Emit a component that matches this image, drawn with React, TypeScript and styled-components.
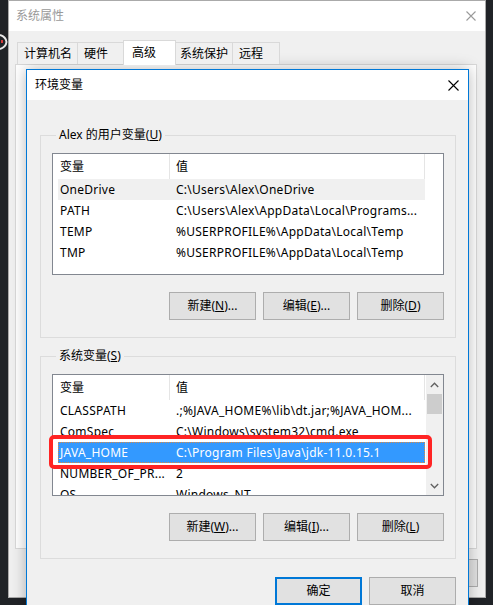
import React from "react";
import styled, { createGlobalStyle } from "styled-components";

const GlobalStyle = createGlobalStyle`
  html, body { margin: 0; padding: 0; background: #202327; overflow: hidden; }
  body {
    font-family: "Noto Sans", "Noto Sans CJK SC", sans-serif;
    font-size: 12px;
    color: #000;
  }
  * { box-sizing: border-box; }
`;

const Desktop = styled.div`
  position: relative;
  width: 493px;
  height: 605px;
  overflow: hidden;
  background: #202327;
`;

const DesktopMark = styled.svg`
  position: absolute;
  left: 0;
  top: 30px;
`;

const OuterWindow = styled.div`
  position: absolute;
  left: 8px;
  top: 0;
  width: 478px;
  height: 598px;
  background: #f0f0f0;
  border: 1px solid #aaaaaa;
  display: flex;
  flex-direction: column;
`;

const TitleBar = styled.div<{ $active?: boolean }>`
  flex: none;
  height: 30px;
  background: #fff;
  display: flex;
  align-items: center;
  justify-content: space-between;
  padding: 0 9px 0 ${(p) => (p.$active ? 8 : 7)}px;
  color: ${(p) => (p.$active ? "#000" : "#999")};
  line-height: 16px;
`;

const CloseGlyph = styled.svg`
  display: block;
  flex: none;
`;

const OuterBody = styled.div`
  flex: 1;
  display: flex;
  flex-direction: column;
  padding: 9px 8px 0 6px;
`;

const TabStrip = styled.div`
  display: flex;
  align-items: flex-end;
  height: 24px;
  padding-left: 2px;
`;

const Tab = styled.div<{ $w: number; $selected?: boolean }>`
  position: relative;
  z-index: ${(p) => (p.$selected ? 2 : 1)};
  width: ${(p) => p.$w}px;
  height: ${(p) => (p.$selected ? 25 : 22)}px;
  margin-left: ${(p) => (p.$selected ? -3 : -1)}px;
  margin-right: ${(p) => (p.$selected ? -2 : 0)}px;
  margin-bottom: ${(p) => (p.$selected ? -1 : 0)}px;
  padding-left: ${(p) => (p.$selected ? 8 : 6)}px;
  border: 1px solid #d9d9d9;
  border-bottom: none;
  background: ${(p) => (p.$selected ? "#fff" : "#f0f0f0")};
  display: flex;
  align-items: center;
  white-space: nowrap;
  line-height: 16px;
  &:first-child { margin-left: 0; }
`;

const TabPanel = styled.div`
  flex: none;
  height: 485px;
  background: #fff;
  border: 1px solid #d9d9d9;
`;

const OuterButtons = styled.div`
  display: flex;
  justify-content: flex-end;
  gap: 6px;
  margin-top: 10px;
  margin-right: -1px;
`;

const EnvDialog = styled.div`
  position: absolute;
  left: 26px;
  top: 69px;
  width: 443px;
  height: 560px;
  border: 1px solid #0078d7;
  background: #f0f0f0;
  box-shadow: 0 0 14px rgba(0, 0, 0, 0.28);
  display: flex;
  flex-direction: column;
`;

const DialogBody = styled.div`
  flex: 1;
  padding: 35px 12px 0 13px;
`;

const Group = styled.section`
  border: 1px solid #dcdcdc;
  padding: 0 11px 17px;
  & + & { margin-top: 18px; }
`;

const Legend = styled.div`
  width: fit-content;
  margin: -9px 0 0 4px;
  padding: 0 3px;
  background: #f0f0f0;
  line-height: 16px;
  white-space: nowrap;
`;

const Key = styled.span`
  text-decoration: underline;
  text-underline-offset: 1px;
`;

const ListWrap = styled.div`
  position: relative;
  margin-top: 10px;
`;

const ListBox = styled.div`
  height: 122px;
  border: 1px solid #828790;
  background: #fff;
  display: flex;
  overflow: hidden;
`;

const ListMain = styled.div`
  flex: 1;
  min-width: 0;
  overflow: hidden;
`;

const Header = styled.div`
  display: flex;
  height: 25px;
`;

const HeaderCell = styled.div<{ $w: number; $pad: number }>`
  flex: none;
  width: ${(p) => p.$w}px;
  padding-left: ${(p) => p.$pad}px;
  border-right: 1px solid #e5e5e5;
  display: flex;
  align-items: center;
  line-height: 16px;
`;

const Row = styled.div<{ $state?: "hover" | "selected" }>`
  display: flex;
  width: 367px;
  height: 21px;
  margin-left: 5px;
  align-items: center;
  white-space: nowrap;
  line-height: 16px;
  letter-spacing: 0.25px;
  background: ${(p) =>
    p.$state === "selected" ? "#3399ff" : p.$state === "hover" ? "#f0f0f0" : "transparent"};
  color: ${(p) => (p.$state === "selected" ? "#fff" : "#000")};
  outline: ${(p) => (p.$state === "selected" ? "1px dotted #d98a45" : "none")};
  outline-offset: -1px;
`;

const NameCell = styled.div`
  flex: none;
  width: 111px;
  padding-left: 2px;
  overflow: hidden;
`;

const ValueCell = styled.div`
  flex: 1;
  min-width: 0;
  padding-left: 7px;
  overflow: hidden;
`;

const ScrollBar = styled.div`
  flex: none;
  width: 17px;
  background: #f0f0f0;
  display: flex;
  flex-direction: column;
`;

const ScrollArrow = styled.div`
  flex: none;
  height: 19px;
  display: flex;
  align-items: center;
  justify-content: center;
`;

const ScrollThumb = styled.div`
  flex: none;
  height: 20px;
  margin: 0 1px;
  background: #cdcdcd;
`;

const ScrollTrack = styled.div`
  flex: 1;
`;

const Annotation = styled.div`
  position: absolute;
  left: -3px;
  top: 61px;
  width: 383px;
  height: 34px;
  border: 4px solid #ff2424;
  border-radius: 5px;
  pointer-events: none;
`;

const ButtonRow = styled.div<{ $gapTop: number }>`
  display: flex;
  justify-content: flex-end;
  gap: 7px;
  margin-top: ${(p) => p.$gapTop}px;
`;

const Button = styled.button<{ $default?: boolean; $w?: number }>`
  flex: none;
  width: ${(p) => p.$w ?? 87}px;
  height: 28px;
  padding: 0;
  background: #e1e1e1;
  border: ${(p) => (p.$default ? "2px solid #0078d7" : "1px solid #adadad")};
  font: inherit;
  color: #000;
  line-height: 16px;
`;

type Var = { name: string; value: string; state?: "hover" | "selected" };

const userVars: Var[] = [
  { name: "OneDrive", value: "C:\\Users\\Alex\\OneDrive", state: "hover" },
  { name: "PATH", value: "C:\\Users\\Alex\\AppData\\Local\\Programs..." },
  { name: "TEMP", value: "%USERPROFILE%\\AppData\\Local\\Temp" },
  { name: "TMP", value: "%USERPROFILE%\\AppData\\Local\\Temp" },
];

const sysVars: Var[] = [
  { name: "CLASSPATH", value: ".;%JAVA_HOME%\\lib\\dt.jar;%JAVA_HOM..." },
  { name: "ComSpec", value: "C:\\Windows\\system32\\cmd.exe" },
  { name: "JAVA_HOME", value: "C:\\Program Files\\Java\\jdk-11.0.15.1", state: "selected" },
  { name: "NUMBER_OF_PR...", value: "2" },
  { name: "OS", value: "Windows_NT" },
];

const Close = ({ color, size }: { color: string; size: number }) => (
  <CloseGlyph width={size} height={size} viewBox={`0 0 ${size} ${size}`}>
    <path
      d={`M0.5 0.5L${size - 0.5} ${size - 0.5}M${size - 0.5} 0.5L0.5 ${size - 0.5}`}
      stroke={color}
      strokeWidth={1.1}
      fill="none"
    />
  </CloseGlyph>
);

const Chevron = ({ up }: { up?: boolean }) => (
  <svg width="9" height="6" viewBox="0 0 9 6">
    <path
      d={up ? "M0.8 5L4.5 1.2L8.2 5" : "M0.8 1L4.5 4.8L8.2 1"}
      stroke="#606060"
      strokeWidth={1.3}
      fill="none"
    />
  </svg>
);

const VarList = ({ vars, scroll, annotate }: { vars: Var[]; scroll?: boolean; annotate?: boolean }) => (
  <ListWrap>
    <ListBox>
      <ListMain>
        <Header>
          <HeaderCell $w={117} $pad={7}>变量</HeaderCell>
          <HeaderCell $w={255} $pad={6}>值</HeaderCell>
        </Header>
        {vars.map((v) => (
          <Row key={v.name} $state={v.state}>
            <NameCell>{v.name}</NameCell>
            <ValueCell>{v.value}</ValueCell>
          </Row>
        ))}
      </ListMain>
      {scroll && (
        <ScrollBar>
          <ScrollArrow><Chevron up /></ScrollArrow>
          <ScrollThumb />
          <ScrollTrack />
          <ScrollArrow><Chevron /></ScrollArrow>
        </ScrollBar>
      )}
    </ListBox>
    {annotate && <Annotation />}
  </ListWrap>
);

export default function App() {
  return (
    <>
      <GlobalStyle />
      <Desktop>
        <DesktopMark width="8" height="24" viewBox="0 0 8 24">
          <path d="M0 5 Q6 7 6.5 12 Q6 17 0 19" stroke="#e8e8e8" strokeWidth="2" fill="none" />
          <rect x="1" y="10" width="2" height="3" fill="#d23a3a" />
        </DesktopMark>

        <OuterWindow>
          <TitleBar>
            <span>系统属性</span>
            <Close color="#9a9a9a" size={10} />
          </TitleBar>
          <OuterBody>
            <TabStrip>
              <Tab $w={61}>计算机名</Tab>
              <Tab $w={49}>硬件</Tab>
              <Tab $w={53} $selected>高级</Tab>
              <Tab $w={60}>系统保护</Tab>
              <Tab $w={48}>远程</Tab>
            </TabStrip>
            <TabPanel />
            <OuterButtons>
              <Button $w={75}>确定</Button>
              <Button $w={75}>取消</Button>
              <Button $w={75}>应用(<Key>A</Key>)</Button>
            </OuterButtons>
          </OuterBody>
        </OuterWindow>

        <EnvDialog>
          <TitleBar $active>
            <span>环境变量</span>
            <Close color="#000" size={11} />
          </TitleBar>
          <DialogBody>
            <Group>
              <Legend>Alex 的用户变量(<Key>U</Key>)</Legend>
              <VarList vars={userVars} />
              <ButtonRow $gapTop={17}>
                <Button>新建(<Key>N</Key>)...</Button>
                <Button>编辑(<Key>E</Key>)...</Button>
                <Button>删除(<Key>D</Key>)</Button>
              </ButtonRow>
            </Group>
            <Group>
              <Legend>系统变量(<Key>S</Key>)</Legend>
              <VarList vars={sysVars} scroll annotate />
              <ButtonRow $gapTop={17}>
                <Button>新建(<Key>W</Key>)...</Button>
                <Button>编辑(<Key>I</Key>)...</Button>
                <Button>删除(<Key>L</Key>)</Button>
              </ButtonRow>
            </Group>
            <ButtonRow $gapTop={18}>
              <Button $default>确定</Button>
              <Button>取消</Button>
            </ButtonRow>
          </DialogBody>
        </EnvDialog>
      </Desktop>
    </>
  );
}
